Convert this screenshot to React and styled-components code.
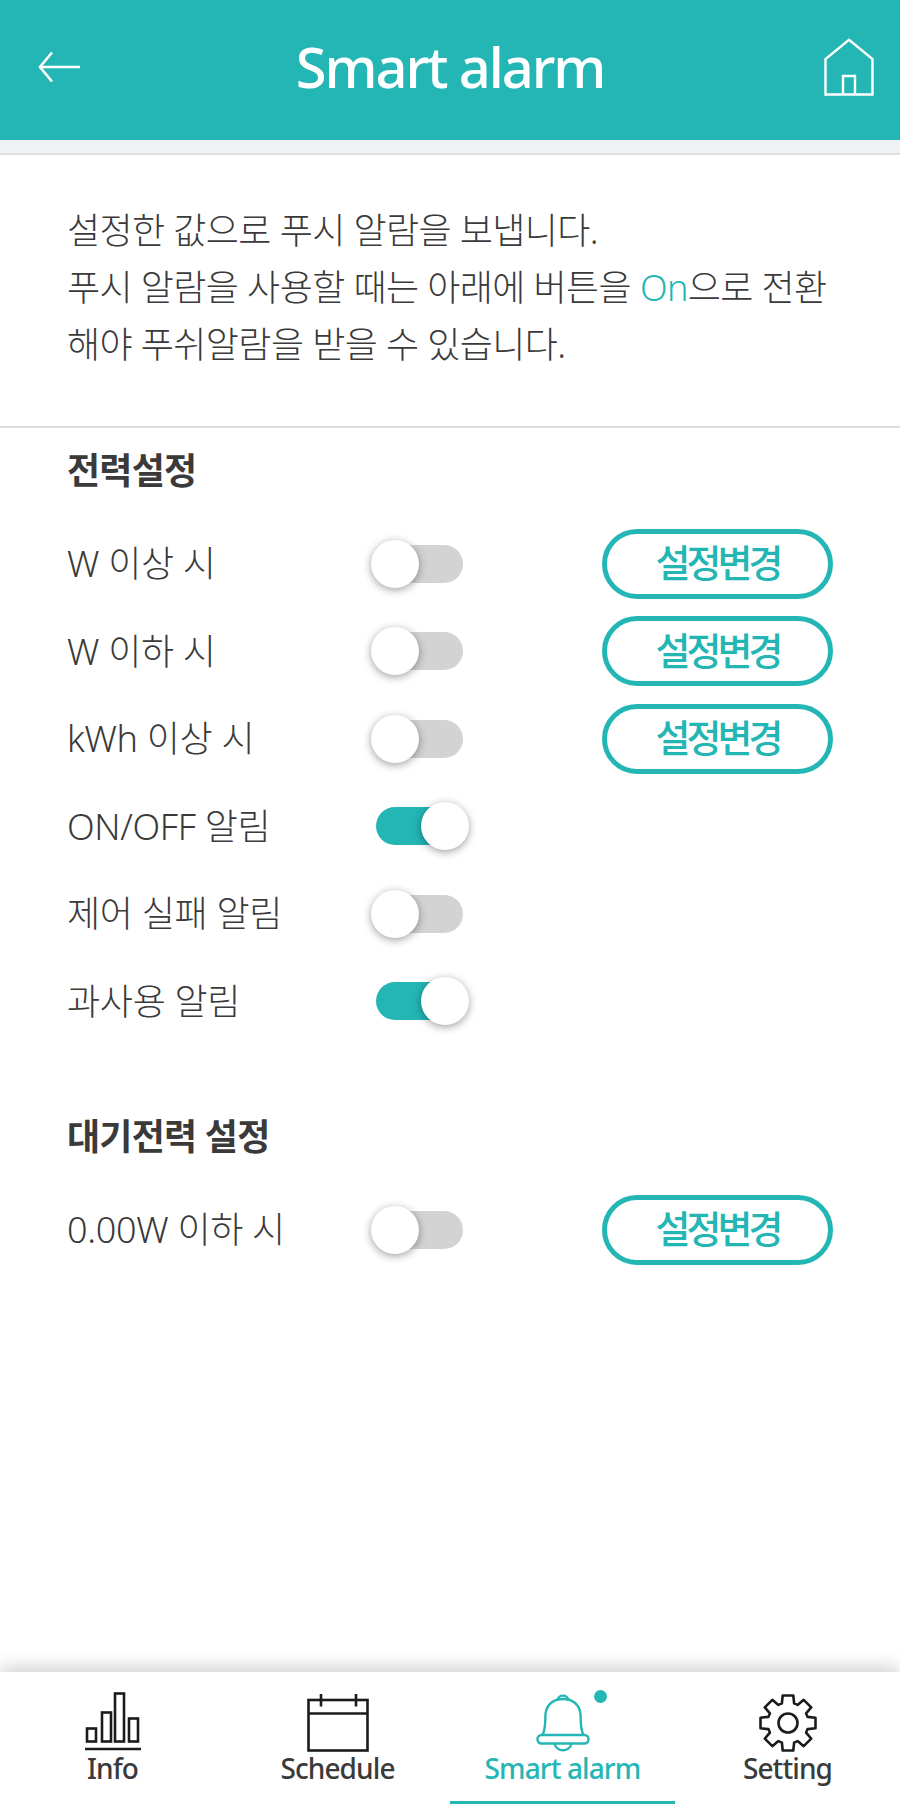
import React from 'react'
import styled, { createGlobalStyle } from 'styled-components'

const TEAL = '#23b6b4'
const INK = '#3a3a3a'
const FONT = '"Noto Sans", "Noto Sans CJK KR", sans-serif'

const Global = createGlobalStyle`
    html, body { margin: 0; padding: 0; background: #fff; }
    body { font-family: ${FONT}; color: ${INK}; }
    * { box-sizing: border-box; }
`

const Page = styled.div`
    width: 900px;
    height: 1804px;
    display: flex;
    flex-direction: column;
    overflow: hidden;
`

const Header = styled.header`
    height: 140px;
    flex: none;
    background: ${TEAL};
    display: grid;
    grid-template-columns: 1fr auto 1fr;
    align-items: center;
    padding: 0 26px 6px;
    color: #fff;
`

const BackButton = styled.div`
    display: flex;
    padding-left: 12px;
`

const Title = styled.h1`
    margin: 0;
    font-size: 56px;
    font-weight: 500;
    letter-spacing: -2.1px;
    line-height: 1.2;
`

const HomeButton = styled.div`
    justify-self: end;
    display: flex;
`

const Band = styled.div`
    height: 15px;
    flex: none;
    background: #eff1f2;
    border-bottom: 2px solid #dfdfdf;
`

const Intro = styled.p`
    margin: 0;
    height: 273px;
    flex: none;
    padding: 47px 30px 0 67px;
    font-size: 36px;
    font-weight: 300;
    line-height: 57px;
    letter-spacing: -0.6px;
    border-bottom: 2px solid #dcdcdc;
`

const Accent = styled.span`
    color: ${TEAL};
`

const Section = styled.section`
    flex: none;
    margin-top: ${p => p.$top}px;
`

const Heading = styled.h2`
    margin: 0 0 8px;
    height: 84px;
    padding-left: 67px;
    font-size: 36px;
    font-weight: 700;
    line-height: 85px;
    letter-spacing: -0.8px;
`

const Row = styled.div`
    height: 87.5px;
    display: grid;
    grid-template-columns: 309px 226px 231px;
    align-items: center;
    padding-left: 67px;
`

const Label = styled.span`
    padding-bottom: 4px;
    font-size: 36px;
    font-weight: 300;
    letter-spacing: -0.3px;
    white-space: nowrap;
`

const Track = styled.div`
    position: relative;
    width: 87px;
    height: 38px;
    border-radius: 19px;
    background: ${p => (p.$on ? TEAL : '#d3d3d3')};
`

const Knob = styled.div`
    position: absolute;
    top: -5px;
    left: ${p => (p.$on ? 45 : -5)}px;
    width: 48px;
    height: 48px;
    border-radius: 50%;
    background: #fff;
    box-shadow: 0 2px 9px rgba(0, 0, 0, 0.38);
`

const ChangeButton = styled.button`
    width: 231px;
    height: 70px;
    padding: 0 0 3px;
    border: 5px solid ${TEAL};
    border-radius: 35px;
    background: #fff;
    color: ${TEAL};
    font-family: ${FONT};
    font-size: 38px;
    font-weight: 500;
    letter-spacing: -3.9px;
    line-height: 1;
`

const Spacer = styled.div`
    flex: 1;
`

const Nav = styled.nav`
    height: 132px;
    flex: none;
    display: grid;
    grid-template-columns: repeat(4, 225px);
    background: #fff;
    box-shadow: 0 -4px 18px rgba(0, 0, 0, 0.2);
`

const Tab = styled.div`
    position: relative;
    display: flex;
    flex-direction: column;
    align-items: center;
    padding-top: 20px;
    color: ${p => (p.$active ? TEAL : INK)};
    border-bottom: 3px solid ${p => (p.$active ? TEAL : 'transparent')};
`

const IconBox = styled.div`
    height: 60px;
    display: flex;
    align-items: flex-end;
`

const TabLabel = styled.span`
    font-size: 28px;
    font-weight: 500;
    letter-spacing: -0.9px;
    line-height: 32px;
    white-space: nowrap;
`

const Dot = styled.span`
    position: absolute;
    top: 18px;
    left: 144px;
    width: 13px;
    height: 13px;
    border-radius: 50%;
    background: ${TEAL};
`

const BackIcon = () => (
    <svg width="42" height="32" viewBox="0 0 42 32" fill="none" stroke="#fff" strokeWidth="2.6">
        <path d="M42 16H2M14 1.5L2 16l12 14.5" />
    </svg>
)

const HomeIcon = () => (
    <svg width="50" height="58" viewBox="0 0 50 58" fill="none" stroke="#fff" strokeWidth="2.4">
        <path d="M1.5 56.5V21L25 1.8 48.5 21v35.5z" />
        <path d="M19 56.5V38h12v18.5" />
    </svg>
)

const InfoIcon = () => (
    <svg width="56" height="60" viewBox="0 0 56 60" fill="none" stroke="#1b1b1b" strokeWidth="2.6">
        <rect x="2" y="36.5" width="9" height="13" />
        <rect x="17" y="20.5" width="9" height="29" />
        <rect x="30" y="1.5" width="9" height="48" />
        <rect x="44" y="26.5" width="9" height="23" />
        <path d="M0 57h56" />
    </svg>
)

const CalendarIcon = () => (
    <svg width="62" height="58" viewBox="0 0 62 58" fill="none" stroke="#1b1b1b" strokeWidth="2.6">
        <rect x="1.5" y="6" width="59" height="50.5" />
        <path d="M1.5 19.5h59M14 0v12.5M49 0v12.5" />
    </svg>
)

const BellIcon = () => (
    <svg width="54" height="58" viewBox="0 0 54 58" fill="none" stroke={TEAL} strokeWidth="2.4" strokeLinejoin="round">
        <path d="M21.5 6.5C21.8 0 32.2 0 32.5 6.5" />
        <path d="M6.5 41C10 34 9 26 9.5 20 10.5 10 18 5 27 5s16.5 5 17.5 15c.5 6-.5 14 3 21" />
        <rect x="1.5" y="41" width="51" height="8.5" rx="4" />
        <path d="M18.5 49.5c2 9 15 9 17 0" />
    </svg>
)

// 8 tooth gear outline
const gearPath = (() => {
    const cx = 29, cy = 29, outer = 28, inner = 20.5
    const pts = []
    for (let i = 0; i < 8; i++) {
        const a = (i * Math.PI) / 4 - Math.PI / 2
        const w = 0.19, v = 0.3
        pts.push([inner, a - v], [outer, a - w], [outer, a + w], [inner, a + v])
    }
    return pts
        .map(([r, a], i) => `${i ? 'L' : 'M'}${(cx + r * Math.cos(a)).toFixed(1)} ${(cy + r * Math.sin(a)).toFixed(1)}`)
        .join('') + 'Z'
})()

const GearIcon = () => (
    <svg width="58" height="58" viewBox="0 0 58 58" fill="none" stroke="#1b1b1b" strokeWidth="2.6" strokeLinejoin="round">
        <path d={gearPath} />
        <circle cx="29" cy="29" r="9.5" />
    </svg>
)

const Toggle = ({ on }) => (
    <Track $on={on}>
        <Knob $on={on} />
    </Track>
)

const powerRows = [
    { label: 'W 이상 시', button: true },
    { label: 'W 이하 시', button: true },
    { label: 'kWh 이상 시', button: true },
    { label: 'ON/OFF 알림', on: true },
    { label: '제어 실패 알림' },
    { label: '과사용 알림', on: true },
]

const tabs = [
    { label: 'Info', icon: <InfoIcon /> },
    { label: 'Schedule', icon: <CalendarIcon /> },
    { label: 'Smart alarm', icon: <BellIcon />, active: true },
    { label: 'Setting', icon: <GearIcon /> },
]

const SettingRow = ({ label, on, button }) => (
    <Row>
        <Label>{label}</Label>
        <Toggle on={on} />
        {button && <ChangeButton>설정변경</ChangeButton>}
    </Row>
)

const App = () => (
    <Page>
        <Global />
        <Header>
            <BackButton>
                <BackIcon />
            </BackButton>
            <Title>Smart alarm</Title>
            <HomeButton>
                <HomeIcon />
            </HomeButton>
        </Header>
        <Band />
        <Intro>
            설정한 값으로 푸시 알람을 보냅니다.
            <br />
            푸시 알람을 사용할 때는 아래에 버튼을 <Accent>On</Accent>으로 전환
            <br />
            해야 푸쉬알람을 받을 수 있습니다.
        </Intro>
        <Section $top={0}>
            <Heading>전력설정</Heading>
            {powerRows.map(r => (
                <SettingRow key={r.label} {...r} />
            ))}
        </Section>
        <Section $top={49}>
            <Heading>대기전력 설정</Heading>
            <SettingRow label="0.00W 이하 시" button />
        </Section>
        <Spacer />
        <Nav>
            {tabs.map(t => (
                <Tab key={t.label} $active={t.active}>
                    <IconBox>{t.icon}</IconBox>
                    <TabLabel>{t.label}</TabLabel>
                    {t.active && <Dot />}
                </Tab>
            ))}
        </Nav>
    </Page>
)

export default App
